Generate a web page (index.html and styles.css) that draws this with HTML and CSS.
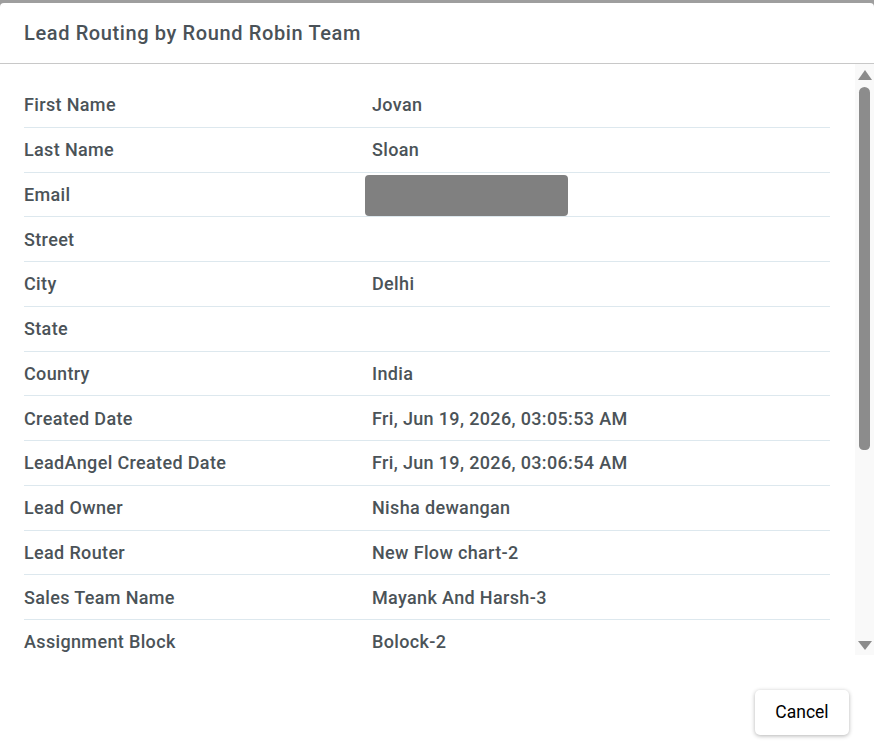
FILE: index.html
```html
<!DOCTYPE html>
<html lang="en">
<head>
  <meta charset="UTF-8" />
  <title>Lead Routing by Round Robin Team</title>
  <link rel="stylesheet" href="styles.css">
</head>
<body>

<div class="dialog">
  <div class="dialog-header">
    <h1>Lead Routing by Round Robin Team</h1>
  </div>

  <div class="dialog-body">
    <div class="details">
      <div class="row"><span class="label">First Name</span><span class="value">Jovan</span></div>
      <div class="row"><span class="label">Last Name</span><span class="value">Sloan</span></div>
      <div class="row"><span class="label">Email</span><span class="value"><span class="redacted"></span></span></div>
      <div class="row"><span class="label">Street</span><span class="value"></span></div>
      <div class="row"><span class="label">City</span><span class="value">Delhi</span></div>
      <div class="row"><span class="label">State</span><span class="value"></span></div>
      <div class="row"><span class="label">Country</span><span class="value">India</span></div>
      <div class="row"><span class="label">Created Date</span><span class="value">Fri, Jun 19, 2026, 03:05:53 AM</span></div>
      <div class="row"><span class="label">LeadAngel Created Date</span><span class="value">Fri, Jun 19, 2026, 03:06:54 AM</span></div>
      <div class="row"><span class="label">Lead Owner</span><span class="value">Nisha dewangan</span></div>
      <div class="row"><span class="label">Lead Router</span><span class="value">New Flow chart-2</span></div>
      <div class="row"><span class="label">Sales Team Name</span><span class="value">Mayank And Harsh-3</span></div>
      <div class="row"><span class="label">Assignment Block</span><span class="value">Bolock-2</span></div>
    </div>

    <div class="scrollbar">
      <span class="arrow up"></span>
      <div class="track"><div class="thumb"></div></div>
      <span class="arrow down"></span>
    </div>
  </div>

  <div class="dialog-footer">
    <button class="cancel-btn">Cancel</button>
  </div>
</div>

</body>
</html>
```

FILE: styles.css
```css
* {
  margin: 0;
  padding: 0;
  box-sizing: border-box;
}

html, body {
  height: 100%;
  background: #9e9e9e;
  font-family: Roboto, "Noto Sans", sans-serif;
  overflow: hidden;
}

body {
  padding-top: 3px;
}

.dialog {
  height: 100%;
  background: #fff;
  border-radius: 4px 4px 0 0;
  display: flex;
  flex-direction: column;
}

.dialog-header {
  height: 61px;
  padding: 0 24px;
  display: flex;
  align-items: center;
  border-bottom: 1px solid #c8c8c8;
}

.dialog-header h1 {
  font-size: 20px;
  font-weight: 500;
  color: #4a5258;
  letter-spacing: 0.62px;
  padding-bottom: 1px;
}

.dialog-body {
  height: 591px;
  display: flex;
}

.details {
  flex: 1;
  overflow: hidden;
  padding: 19px 25px 0 24px;
}

.row {
  height: 44.75px;
  display: flex;
  align-items: center;
  border-bottom: 1px solid #dde8ee;
  font-size: 18px;
  font-weight: 500;
  letter-spacing: 0.35px;
  color: #4b5358;
}

.label {
  width: 348px;
  flex-shrink: 0;
}

.redacted {
  display: block;
  width: 203px;
  height: 41px;
  margin: 3px 0 0 -7px;
  background: #808080;
  border-radius: 4px;
}

/* scrollbar drawn in flow beside the list */
.scrollbar {
  width: 19px;
  background: #f9f9f9;
  display: flex;
  flex-direction: column;
  align-items: center;
  padding: 6px 0 5px;
}

.arrow {
  width: 0;
  height: 0;
  border-left: 7px solid transparent;
  border-right: 7px solid transparent;
}

.arrow.up {
  border-bottom: 10px solid #8c8c8c;
}

.arrow.down {
  border-top: 9px solid #8c8c8c;
}

.track {
  flex: 1;
  width: 11px;
  padding: 7px 0 8px;
}

.thumb {
  height: 363px;
  background: #8c8c8c;
  border-radius: 6px 6px 5px 5px;
}

.dialog-footer {
  flex: 1;
  display: flex;
  justify-content: flex-end;
  align-items: flex-start;
  padding: 35px 25px 0;
}

.cancel-btn {
  width: 94px;
  height: 45px;
  background: #fff;
  border: none;
  border-radius: 5px;
  box-shadow: 0 1px 4px rgba(0, 0, 0, 0.3);
  font-family: Roboto, "Noto Sans", sans-serif;
  font-size: 17.5px;
  color: #000;
  padding-bottom: 2px;
  cursor: pointer;
}
```
